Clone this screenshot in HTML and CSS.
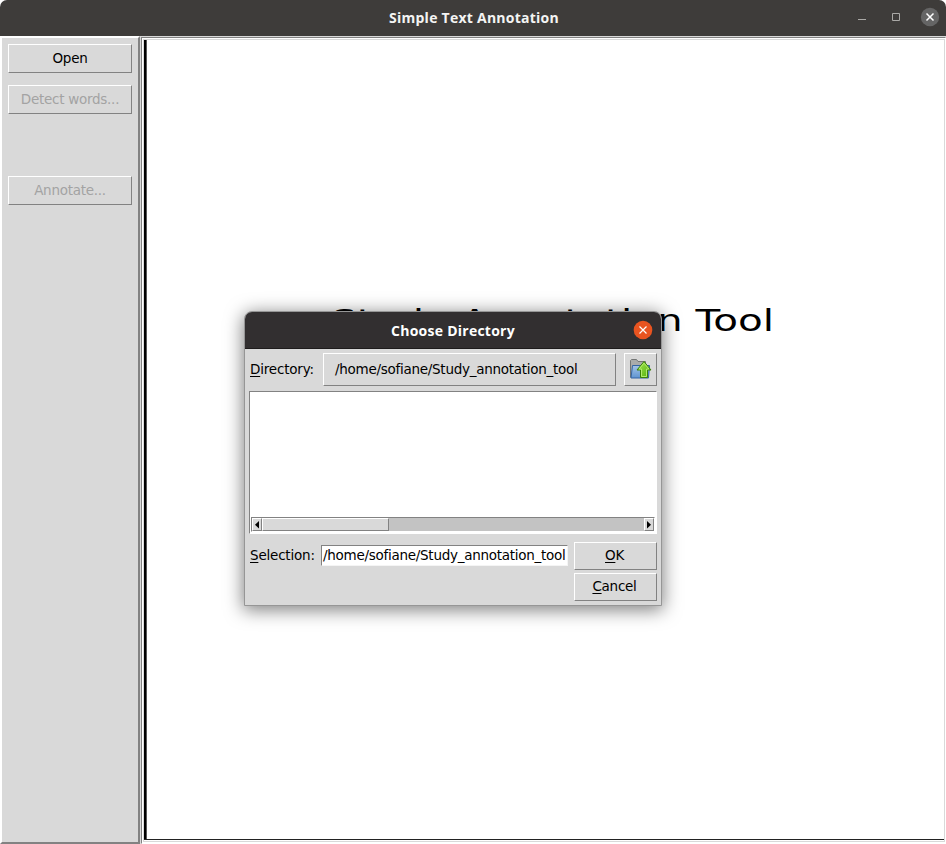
FILE: index.html
```html
<!DOCTYPE html>
<html lang="en">
<head>
<meta charset="utf-8">
<title>Simple Text Annotation</title>
<link rel="stylesheet" href="styles.css">
</head>
<body>
<div class="window">
  <header class="titlebar">
    <h1 class="title">Simple Text Annotation</h1>
    <div class="controls">
      <svg width="90" height="36" viewBox="0 0 90 36">
        <path d="M2 19.500h8M36.500 13.500h7v7h-7z" fill="none" stroke="#aaa9a6"/>
        <circle cx="74" cy="17" r="9.200" fill="#656565"/>
        <path d="M70.500 13.500l7 7m0-7l-7 7" stroke="#fff" stroke-width="1.500"/>
      </svg>
    </div>
  </header>
  <main class="body">
    <nav class="sidebar">
      <button class="button">Open</button>
      <button class="button disabled">Detect words...</button>
      <button class="button disabled last">Annotate...</button>
    </nav>
    <section class="frame">
      <div class="canvas">
        <svg class="banner" width="797" height="60" viewBox="0 0 797 60">
          <text class="banner-text" x="184" y="41" textLength="443" lengthAdjust="spacingAndGlyphs">Study Annotation Tool</text>
        </svg>
      </div>
    </section>
  </main>
</div>
<div class="dialog">
  <header class="dialog-title">
    <h2 class="title">Choose Directory</h2>
    <svg class="dialog-close" width="20" height="20" viewBox="0 0 20 20">
      <circle cx="10" cy="10" r="9.300" fill="#e95420"/>
      <path d="M6.500 6.500l7 7m0-7l-7 7" stroke="#fff" stroke-width="1.200"/>
    </svg>
  </header>
  <div class="dir-row">
    <label class="label"><u>D</u>irectory:</label>
    <button class="button path"><span>/home/sofiane/Study_annotation_tool</span></button>
    <button class="button up">
      <svg width="31" height="31" viewBox="0 0 31 31">
        <defs>
          <linearGradient id="folder" x2="0" y2="1"><stop stop-color="#a3c4e8"/><stop offset="1" stop-color="#5f94d0"/></linearGradient>
          <linearGradient id="arrow" x2="1" y2="1"><stop stop-color="#a5e84e"/><stop offset="1" stop-color="#4ead0b"/></linearGradient>
        </defs>
        <path d="M5.500 23.500v-17l1-1h5l1.500 2h7.500v14" fill="#a9abaa" stroke="#737675"/>
        <path d="M7.500 11.500h17l-1 12.500H6z" fill="url(#folder)" stroke="#3465a4"/>
        <path d="M19 7.500l7 8.500h-3.500v7.500h-7V16H12z" fill="url(#arrow)" stroke="#3a8208"/>
        <path d="M19 9.200l4.900 5.800h-2.400v7.500h-5V15h-2.400z" fill="none" stroke="#b8ef75" stroke-width=".9"/>
      </svg>
    </button>
  </div>
  <div class="list">
    <div class="list-space"></div>
    <div class="scrollbar">
      <svg class="scroll-arrow" width="10" height="13" viewBox="0 0 8 11"><path d="M6 2v7.500L2 5.700z"/></svg>
      <div class="thumb"></div>
      <svg class="scroll-arrow right" width="10" height="13" viewBox="0 0 8 11"><path d="M2 2v7.500l4-3.800z"/></svg>
    </div>
  </div>
  <div class="select-row">
    <label class="label selection"><u>S</u>election:</label>
    <div class="entry">/home/sofiane/Study_annotation_tool</div>
    <div class="actions">
      <button class="button"><span><u>O</u>K</span></button>
      <button class="button"><span><u>C</u>ancel</span></button>
    </div>
  </div>
</div>
</body>
</html>
```
FILE: styles.css
```css
* { box-sizing: border-box; }
body {
  margin: 0;
  width: 946px;
  height: 844px;
  overflow: hidden;
  background: #fff;
  font: 13.5px/18px "DejaVu Sans", sans-serif;
  letter-spacing: -.27px;
  color: #000;
}
.window { display: flex; flex-direction: column; height: 844px; }
.titlebar {
  display: flex;
  flex: 0 0 36px;
  align-items: center;
  justify-content: flex-end;
  position: relative;
  background: #3e3c3a;
  border-radius: 7px 7px 0 0;
}
.title {
  margin: 0;
  color: #fff;
  font: bold 14px/20px "Open Sans", "Noto Sans", sans-serif;
  letter-spacing: .25px;
  white-space: nowrap;
}
.titlebar .title { position: absolute; left: 1px; right: -1px; top: 8px; text-align: center; color: #f4f4f3; }
.controls { height: 36px; }
.body { display: flex; flex: 1; min-height: 0; background: #d9d9d9; }
.sidebar {
  display: flex;
  flex: 0 0 140px;
  flex-direction: column;
  padding: 6px 6px;
  border: 2px solid;
  border-color: #fff #828282 #828282 #fff;
}
.button {
  display: flex;
  align-items: center;
  justify-content: center;
  height: 29px;
  margin: 0 0 12px;
  padding: 0 0 1px;
  border: 1px solid;
  border-color: #fff #828282 #828282 #fff;
  background: #d9d9d9;
  font: inherit;
  letter-spacing: inherit;
  color: #000;
}
.disabled { color: #a3a3a3; }
.last { margin-top: 50px; }
.frame {
  display: flex;
  flex: 1;
  margin: 1px 0 0 1px;
  border: 1px solid;
  border-color: #828282 #fff #fff #828282;
  padding: 1px 0 1px 1px;
  background: #fff;
}
.canvas {
  flex: 1;
  border: 1px solid #d9d9d9;
  background: linear-gradient(0deg, #fff 1px, #222 1px, #222 2px, transparent 2px), linear-gradient(90deg, #000 2px, #555 2px, #555 3px, transparent 3px);
  background-clip: padding-box;
  padding: 250px 0 0 3px;
}
.banner { display: block; }
.banner-text { font-size: 30px; letter-spacing: 0; }
.dialog {
  position: absolute;
  left: 244px;
  top: 311px;
  width: 418px;
  height: 295px;
  border: 1px solid #969696;
  border-radius: 8px 8px 0 0;
  background: #d9d9d9;
  box-shadow: 0 3px 18px 1px rgba(0, 0, 0, .5);
}
.dialog-title {
  display: flex;
  align-items: center;
  justify-content: center;
  position: relative;
  height: 37px;
  padding-top: 2px;
  border-bottom: 1px solid #1e1c1c;
  border-radius: 7px 7px 0 0;
  background: #322f30;
}
.dialog-close { position: absolute; right: 8px; top: 8px; }
.dir-row { display: flex; height: 42px; padding: 4px 4px 0 5px; }
.label { width: 73px; padding-top: 7px; letter-spacing: -.2px; white-space: nowrap; }
u { text-decoration: underline 1px; text-underline-offset: 2px; text-decoration-skip-ink: none; }
.path { width: 293px; height: 33px; justify-content: flex-start; padding-left: 11px; margin-right: 8px; }
.up { width: 33px; height: 33px; padding: 0; }
.list {
  height: 143px;
  margin: 0 4px;
  border: 1px solid;
  border-color: #828282 #fff #fff #828282;
  background: #fff;
}
.list-space { height: 125px; }
.scrollbar {
  display: flex;
  width: 404px;
  height: 15px;
  margin-left: 1px;
  border: 1px solid;
  border-color: #828282 #fff #fff #828282;
  background: #c3c3c3;
}
.scroll-arrow { flex: 0 0 10px; border: 1px solid; border-color: #fff #828282 #828282 #fff; background: #d9d9d9; }
.scroll-arrow.right { margin-left: auto; }
.thumb { width: 127px; border: 1px solid; border-color: #fff #828282 #828282 #fff; background: #d9d9d9; }
.select-row { display: flex; padding: 8px 4px 0 5px; }
.selection { width: 71px; padding-top: 4px; }
.entry {
  width: 247px;
  height: 21px;
  margin: 3px 6px 0 0;
  padding: 0 0 0 1px;
  border: 1px solid;
  border-color: #828282 #f4f4f4 #f4f4f4 #828282;
  background: #fff;
  white-space: nowrap;
}
.actions { display: flex; flex: 1; flex-direction: column; gap: 3px; }
.actions .button { height: 28px; margin: 0; padding: 0 2px 2px 0; }
```
